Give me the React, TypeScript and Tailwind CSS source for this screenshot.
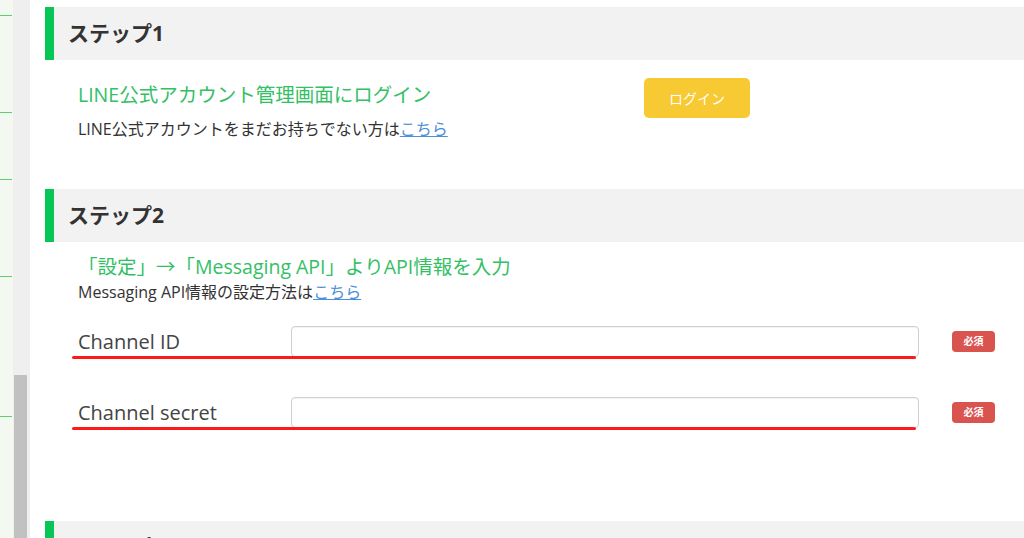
import React from 'react';

const FONT = { fontFamily: '"Open Sans", "Noto Sans CJK JP", sans-serif' };

function StepHeader({ title }: { title: string }) {
  return (
    <div className="flex h-[53px] items-center border-l-[9px] border-[#06c755] bg-[#f2f2f2] pl-[14px]">
      <h2 className="text-[21px] font-bold leading-none text-[#333]">{title}</h2>
    </div>
  );
}

function Field({ label }: { label: string }) {
  return (
    <div className="relative flex items-center">
      <label className="w-[246px] pl-[33px] text-[20px] text-[#444]">{label}</label>
      <input
        type="text"
        className="h-[31px] w-[628px] rounded-[4px] border border-[#cfcfcf] bg-white shadow-[inset_0_1px_1px_rgba(0,0,0,0.05)] outline-none"
      />
      <span className="ml-[33px] flex h-[21px] w-[43px] items-center justify-center rounded-[4px] bg-[#d9534f] text-[10px] font-bold text-white">
        必須
      </span>
      {/* red annotation underline */}
      <div className="absolute left-[27px] top-[30px] h-[3px] w-[844px] rounded-full bg-[#ff1a1a]" />
    </div>
  );
}

export default function App() {
  return (
    <div className="flex h-[538px] w-[1024px] overflow-hidden bg-white" style={FONT}>
      {/* sidebar edge */}
      <div className="flex w-[13px] flex-col bg-[#f3f9f0]">
        <div className="mt-[15px] h-px w-[12px] bg-[#5ccf6e]" />
        <div className="mt-[96px] h-px w-[12px] bg-[#5ccf6e]" />
        <div className="mt-[66px] h-px w-[12px] bg-[#5ccf6e]" />
        <div className="mt-[96px] h-px w-[12px] bg-[#5ccf6e]" />
        <div className="mt-[139px] h-px w-[12px] bg-[#5ccf6e]" />
      </div>
      {/* scrollbar */}
      <div className="flex w-[17px] flex-col bg-[#efefef]">
        <div className="ml-px mt-[375px] w-[13px] flex-1 bg-[#c1c1c1]" />
      </div>

      <main className="flex-1 pl-[15px] pt-[7px]">
        <StepHeader title="ステップ1" />
        <div className="flex h-[129px]">
          <div className="w-[599px] pl-[33px] pt-[23px]">
            <p className="text-[19.5px] leading-[24px] text-[#33c065]">LINE公式アカウント管理画面にログイン</p>
            <p className="mt-[12px] text-[16px] leading-[20px] text-[#333]">
              LINE公式アカウントをまだお持ちでない方は
              <a href="#" className="text-[#4a8fd8] underline">こちら</a>
            </p>
          </div>
          <button className="mt-[18px] h-[40px] w-[106px] rounded-[5px] bg-[#f7c932] text-[14px] text-white">
            ログイン
          </button>
        </div>

        <StepHeader title="ステップ2" />
        <div className="pl-[33px] pt-[13px]">
          <p className="text-[19.5px] leading-[24px] text-[#33c065]">「設定」→「Messaging API」よりAPI情報を入力</p>
          <p className="mt-[3px] text-[16px] leading-[20px] text-[#333]">
            Messaging API情報の設定方法は
            <a href="#" className="text-[#4a8fd8] underline">こちら</a>
          </p>
        </div>

        <div className="mt-[24px] flex flex-col gap-[40px]">
          <Field label="Channel ID" />
          <Field label="Channel secret" />
        </div>

        <div className="mt-[93px]">
          <StepHeader title="ステップ3" />
        </div>
      </main>
    </div>
  );
}
